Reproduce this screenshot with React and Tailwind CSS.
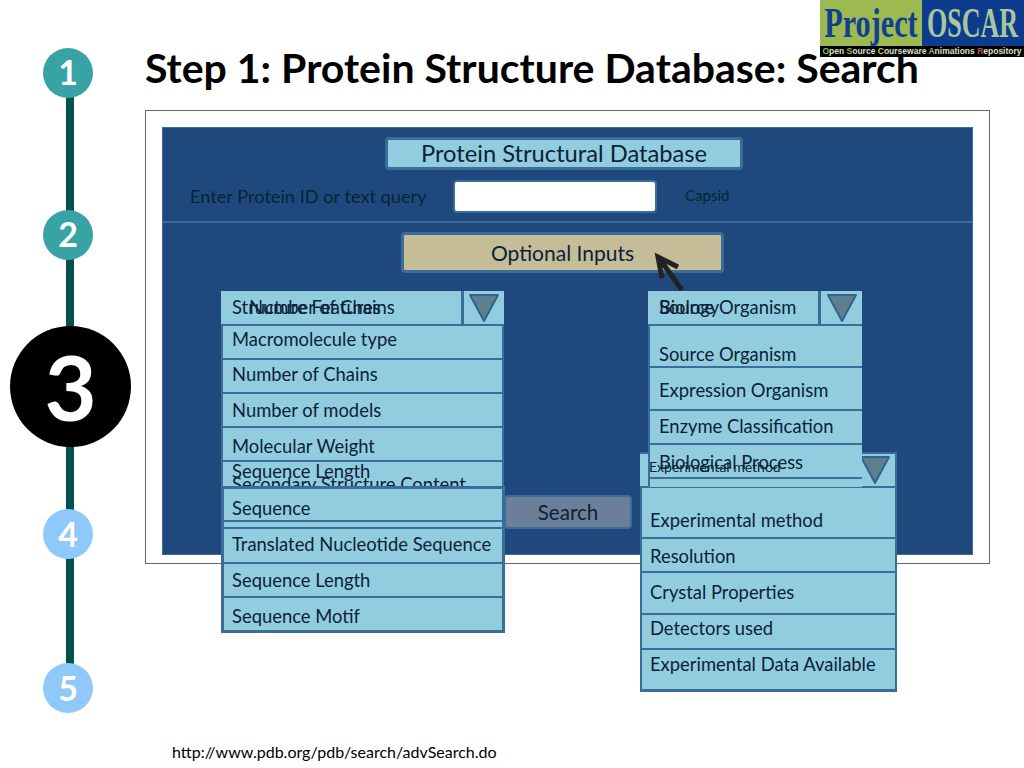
const sans = "font-['Lato','Liberation_Sans',sans-serif]";

function Step({ className, children }) {
  return (
    <div className={`absolute flex items-center justify-center rounded-full font-bold text-white ${className}`}>
      {children}
    </div>
  );
}

function Rail() {
  return (
    <div className="absolute left-0 top-0 h-full w-[140px]">
      <div className="absolute left-[66px] top-[72px] h-[616px] w-[8px] bg-[#04524f]" />
      <Step className="left-[43px] top-[48px] h-[50px] w-[50px] bg-[#38a3a5] pb-[3px] text-[34px]">1</Step>
      <Step className="left-[43px] top-[210px] h-[50px] w-[50px] bg-[#38a3a5] pb-[3px] text-[34px]">2</Step>
      <Step className="left-[10px] top-[326px] h-[121px] w-[121px] bg-black text-[90px] font-black">3</Step>
      <Step className="left-[43px] top-[509px] h-[50px] w-[50px] bg-[#8fc9f9] pb-[2px] text-[34px]">4</Step>
      <Step className="left-[43px] top-[663px] h-[50px] w-[50px] bg-[#8fc9f9] pb-[2px] text-[34px]">5</Step>
    </div>
  );
}

function Logo() {
  return (
    <div className="absolute right-0 top-0 flex h-[57px] w-[204px] flex-col font-['Liberation_Serif',serif] font-bold">
      <div className="flex h-[46px]">
        <div className="flex w-[102px] items-center justify-center overflow-hidden bg-[#9cba50]">
          <span className="origin-center scale-x-[0.72] text-[42px] leading-none text-[#123f8f]">Project</span>
        </div>
        <div className="flex w-[102px] items-center justify-center overflow-hidden bg-[#0e3c8c]">
          <span className="origin-center scale-x-[0.62] text-[42px] leading-none text-[#a9c6a0]">OSCAR</span>
        </div>
      </div>
      <div className="flex h-[11px] items-center justify-center whitespace-nowrap bg-black font-['Liberation_Sans',sans-serif] text-[8.5px] leading-none text-[#d8e0c8]">
        <span><span className="text-[#9cba50]">O</span>pen <span className="text-[#9cba50]">S</span>ource <span className="text-[#e0c040]">C</span>ourseware <span className="text-[#9cba50]">A</span>nimations <span className="text-[#c05040]">R</span>epository</span>
      </div>
    </div>
  );
}

function Triangle() {
  return (
    <svg width="32" height="30" viewBox="0 0 32 30">
      <path d="M2 2 H30 L16 28 Z" fill="#5f7f8f" stroke="#2f6690" strokeWidth="2" strokeLinejoin="round" />
    </svg>
  );
}

function Row({ className = "", children }) {
  return (
    <div className={`flex items-center whitespace-nowrap border-b-2 border-[#3a6d99] text-[18.4px] leading-none text-[#0b2238] ${className}`}>
      {children}
    </div>
  );
}

function Select({ className, arrowClass, children }) {
  return (
    <div className={`absolute flex border-b-2 border-[#3a6d99] bg-[#92cddf] ${className}`}>
      <div className="relative flex-1 overflow-hidden border-r-[3px] border-[#3a6d99]">{children}</div>
      <div className={`flex items-center justify-center ${arrowClass}`}>
        <Triangle />
      </div>
    </div>
  );
}

function Dropdowns() {
  return (
    <>
      {/* Experimental method, sits under the biology list */}
      <Select className="left-[477px] top-[324px] h-[36px] w-[257px] border-t-2 border-r-2 border-t-[#3a6d99] border-r-[#3a6d99]" arrowClass="w-[41px]" />
      <div className="absolute left-[477px] top-[360px] flex h-[204px] w-[257px] flex-col border-x-2 border-b-[3px] border-[#3a6d99] bg-[#92cddf]">
        <Row className="h-[51px] pl-[8px] pt-[16px]">Experimental method</Row>
        <Row className="h-[34px] pl-[8px] pt-[2px]">Resolution</Row>
        <Row className="h-[42px] pb-[2px] pl-[8px]">Crystal Properties</Row>
        <Row className="h-[35px] pb-[6px] pl-[8px]">Detectors used</Row>
        <div className="flex h-[28px] items-center pl-[8px] text-[18.4px] leading-none text-[#0b2238]">Experimental Data Available</div>
      </div>

      {/* Biology */}
      <Select className="left-[485px] top-[163px] h-[35px] w-[214px]" arrowClass="w-[41px]">
        <span className="absolute left-[11px] top-[3px] whitespace-nowrap text-[18.4px] text-[#0b2238]">Biology</span>
        <span className="absolute left-[11px] top-[3px] whitespace-nowrap text-[18.4px] text-[#0b2238]">Source Organism</span>
      </Select>
      <div className="absolute left-[485px] top-[198px] flex h-[161px] w-[214px] flex-col border-l-2 border-[#3a6d99] bg-[#92cddf]">
        <Row className="h-[42px] pl-[9px] pt-[16px]">Source Organism</Row>
        <Row className="h-[43px] pl-[9px] pt-[4px]">Expression Organism</Row>
        <Row className="h-[34px] pb-[2px] pl-[9px]">Enzyme Classification</Row>
        <Row className="h-[34px] pl-[9px] pt-[2px]">Biological Process</Row>
        <div className="h-[8px]" />
      </div>
      <span className="absolute left-[486px] top-[332px] whitespace-nowrap text-[14px] leading-none text-[#0b2238]">Experimental method</span>

      {/* Structure features */}
      <Select className="left-[58px] top-[163px] h-[35px] w-[283px]" arrowClass="w-[40px]">
        <span className="absolute left-[11px] top-[3px] whitespace-nowrap text-[18.4px] text-[#0b2238]">Structure Features</span>
        <span className="absolute left-[28px] top-[3px] whitespace-nowrap text-[18.4px] text-[#0b2238]">Number of Chains</span>
      </Select>
      <div className="absolute left-[58px] top-[198px] flex w-[283px] flex-col border-x-2 border-[#3a6d99] bg-[#92cddf]">
        <Row className="h-[34px] pb-[6px] pl-[9px]">Macromolecule type</Row>
        <Row className="h-[34px] pb-[4px] pl-[9px]">Number of Chains</Row>
        <Row className="h-[34px] pl-[9px]">Number of models</Row>
        <Row className="h-[34px] pl-[9px] pt-[4px]">Molecular Weight</Row>
        <div className="relative h-[26px] overflow-hidden text-[18.4px] leading-none text-[#0b2238]">
          <span className="absolute left-[9px] top-[13px] whitespace-nowrap">Secondary Structure Content</span>
          <span className="absolute left-[9px] top-[0px] whitespace-nowrap">Sequence Length</span>
        </div>
      </div>
      <div className="absolute left-[58px] top-[358px] flex w-[284px] flex-col border-[3px] border-[#3a6d99] bg-[#92cddf]">
        <Row className="h-[33px] pl-[8px] pt-[7px]">Sequence</Row>
        <div className="h-[7px] border-b-2 border-[#3a6d99]" />
        <Row className="h-[35px] pb-[3px] pl-[8px]">Translated Nucleotide Sequence</Row>
        <Row className="h-[34px] pl-[8px]">Sequence Length</Row>
        <div className="flex h-[32px] items-center pl-[8px] pt-[4px] text-[18.4px] leading-none text-[#0b2238]">Sequence Motif</div>
      </div>
    </>
  );
}

export default function App() {
  return (
    <div className={`relative h-[768px] w-[1024px] overflow-hidden bg-white ${sans}`}>
      <Rail />
      <Logo />
      <div className="flex h-full flex-col pl-[145px] pr-[34px]">
        <h1 className="mt-[43px] h-[57px] whitespace-nowrap text-[41px] font-bold leading-[50px] text-black">
          Step 1: Protein Structure Database: Search
        </h1>
        <div className="mt-[10px] h-[454px] border border-[#666666] px-[16px] pb-[8px] pt-[16px]">
          <div className="relative flex h-full flex-col border border-[#3a6d99] bg-[#1f497d]">
            <div className="flex justify-center pr-[7px] pt-[9px]">
              <div className="flex h-[33px] w-[358px] items-center justify-center rounded-[4px] border-[3px] border-[#3a6d99] bg-[#92cddf] text-[23.7px] leading-none text-[#0b2238]">
                Protein Structural Database
              </div>
            </div>
            <div className="flex h-[53px] items-center border-b-2 border-[#3a6d99] pt-[2px] text-[#0b2238]">
              <span className="ml-[27px] w-[263px] whitespace-nowrap text-[18.2px]">Enter Protein ID or text query</span>
              <div className="h-[33px] w-[204px] rounded-[4px] border-2 border-[#3a6d99] bg-white" />
              <span className="ml-[28px] -mt-[3px] text-[15px]">Capsid</span>
            </div>
            <div className="flex justify-center pr-[10px] pt-[9px]">
              <div className="flex h-[41px] w-[323px] items-center justify-center rounded-[4px] border-[3px] border-[#3a6d99] bg-[#c4bd97] text-[21px] leading-none text-[#0b2238]">
                Optional Inputs
              </div>
            </div>
            <div className="absolute left-[341px] top-[367px] flex h-[34px] w-[128px] items-center justify-center rounded-[4px] border-2 border-[#3a6d99] bg-[#6b7f99] text-[20.6px] leading-none text-[#0b2238]">
              Search
            </div>
            <svg className="absolute left-[490px] top-[122px]" width="40" height="46" viewBox="0 0 40 46">
              <path d="M29 40 L6 8 M9 28 L5 7 L25 17" fill="none" stroke="#222222" strokeWidth="5" />
            </svg>
            <Dropdowns />
          </div>
        </div>
        <p className="ml-[27px] mt-[178px] whitespace-nowrap text-[16px] leading-5 text-black">
          http://www.pdb.org/pdb/search/advSearch.do
        </p>
      </div>
    </div>
  );
}
